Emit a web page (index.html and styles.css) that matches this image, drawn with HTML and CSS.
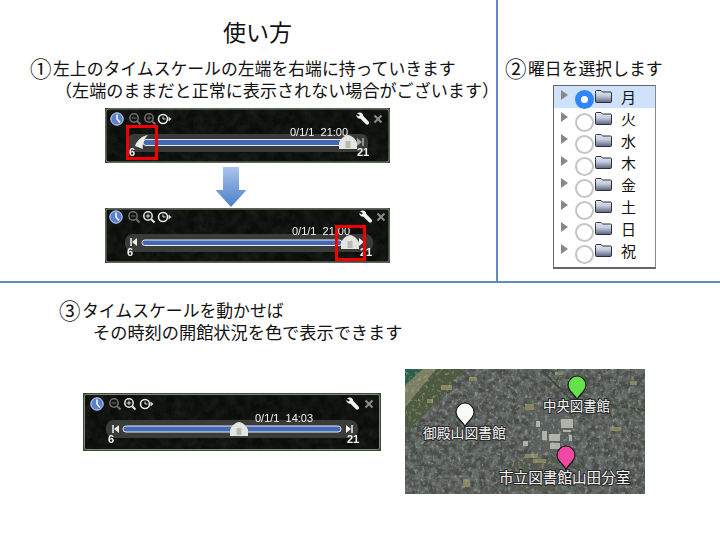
FILE: index.html
```html
<!DOCTYPE html>
<html lang="ja">
<head>
<meta charset="utf-8">
<title>使い方</title>
<link rel="stylesheet" href="styles.css">
</head>
<body>
<svg class="defs" width="0" height="0" aria-hidden="true">
  <defs>
    <filter id="grain" x="0" y="0" width="100%" height="100%">
      <feTurbulence type="fractalNoise" baseFrequency="0.11" numOctaves="4" seed="7"/>
      <feColorMatrix values="0 0 0 0 .16  0 0 0 0 .18  0 0 0 0 .16  1.8 0 0 0 -.5"/>
    </filter>
    <filter id="fine" x="0" y="0" width="100%" height="100%">
      <feTurbulence type="fractalNoise" baseFrequency="0.16" numOctaves="4" seed="11"/>
      <feColorMatrix values="0 0 0 0 .13  0 0 0 0 .15  0 0 0 0 .14  3 0 0 0 -1"/>
    </filter>
    <filter id="speck" x="0" y="0" width="100%" height="100%">
      <feTurbulence type="fractalNoise" baseFrequency="0.3" numOctaves="3" seed="3"/>
      <feColorMatrix values="0 0 0 0 .6  0 0 0 0 .62  0 0 0 0 .55  3 0 0 0 -1.6"/>
    </filter>
    <filter id="soft"><feGaussianBlur stdDeviation=".7"/></filter>
    <linearGradient id="fg" x1="0" y1="0" x2="0" y2="1">
      <stop offset="0" stop-color="#e6eaf2"/>
      <stop offset=".45" stop-color="#c2cbdc"/>
      <stop offset="1" stop-color="#59627f"/>
    </linearGradient>
    <linearGradient id="arrowfill" x1="0" y1="0" x2="0" y2="1">
      <stop offset="0" stop-color="#a9c5ec"/>
      <stop offset="1" stop-color="#4a7fc8"/>
    </linearGradient>
    <g id="clock"><circle r="6.200" fill="#5b7fd0" stroke="#d5dff5"/><path d="M0-4.500V0L3 3.500" fill="none" stroke="#fff" stroke-width="1.500"/></g>
    <g id="zoomout"><circle cx="-1" cy="-1" r="4.200" fill="none" stroke="currentColor" stroke-width="1.500"/><path d="M2.200 2.200L5.500 5.500" stroke="currentColor" stroke-width="2"/><path d="M-3.300-1H1.300" stroke="currentColor"/></g>
    <g id="zoomin"><use href="#zoomout"/><path d="M-1-3.300V1.300" stroke="currentColor"/></g>
    <g id="time"><circle cx="-1" r="4.500" fill="none" stroke="#ececec" stroke-width="1.600"/><path d="M-1-2.500V0H1.500" fill="none" stroke="#e6e6e6"/><path d="M4.500-2.500L7.500 0L4.500 2.500Z" fill="#ddd"/></g>
    <path id="wrench" d="M-6-5.500C-3-7.500 0-6 .3-3L6 3C6.600 4.500 5 6.200 3.300 5.500L-2.500-.3C-5-.2-6.800-2-6.700-4L-4.300-2.600L-3-4Z" fill="#f2f2f2"/>
    <path id="close" d="M-3.500-3.500L3.500 3.500M3.500-3.500L-3.500 3.500" stroke="#8c8c8c" stroke-width="2"/>
    <g id="skipl"><path d="M-3-4V4" stroke="#eee" stroke-width="1.500"/><path d="M3-4V4L-2 0Z" fill="#eee"/></g>
    <g id="skipr"><path d="M3-4V4" stroke="#eee" stroke-width="1.500"/><path d="M-3-4V4L2 0Z" fill="#eee"/></g>
    <g id="handle"><path d="M-9 7V1C-8-3-3-7 0-7C3-7 8-3 9 1V7Z" fill="#e4e4e0"/><rect x="-2.500" y="-1" width="5" height="7" fill="#b9b9b4"/></g>
    <path id="pin" d="M0 0C-2-6-9-8-9-15C-9-20-4.500-24 0-24C4.500-24 9-20 9-15C9-8 2-6 0 0Z" stroke="#111" stroke-width="1.200"/>
    <path id="folder" fill="url(#fg)" stroke="#2b2f3c" d="M.5 3.500V1.500Q.5.500 1.500.500H6L7.500 2H15.500Q16.500 2 16.500 3V11.500Q16.500 12.500 15.500 12.500H1.500Q.5 12.500 .5 11.500Z"/>
  </defs>
</svg>

<main class="slide">
  <div class="rule-v"></div>
  <div class="rule-h"></div>

  <h1 class="title">使い方</h1>
  <p class="step step-1"><span class="num-mark">①</span>左上のタイムスケールの左端を右端に持っていきます</p>
  <p class="step step-1b">（左端のままだと正常に表示されない場合がございます）</p>
  <p class="step step-2"><span class="num-mark">②</span>曜日を選択します</p>
  <p class="step step-3"><span class="num-mark">③</span>タイムスケールを動かせば</p>
  <p class="step step-3b">その時刻の開館状況を色で表示できます</p>

  <svg class="panel panel-a" viewBox="0 0 285 55" width="285" height="55">
    <rect width="285" height="55" fill="#3a4a33"/>
    <rect x="1" y="1" width="283" height="53" rx="3" fill="#0b0d0b" stroke="#7f8a7c"/>
    <rect class="haze" x="2" y="2" width="281" height="51" filter="url(#grain)"/>
    <use href="#clock" x="12" y="11"/>
    <use href="#zoomout" x="30" y="11" class="dim"/>
    <use href="#zoomin" x="45" y="11" class="dim"/>
    <use href="#time" x="59" y="11"/>
    <use href="#wrench" x="258" y="11"/>
    <use href="#close" x="273" y="11"/>
    <rect class="track" x="22" y="26" width="241" height="18" rx="7"/>
    <use href="#skipr" x="255" y="34" opacity=".6"/>
    <rect x="38" y="31.500" width="202" height="6" rx="3" fill="#4468b8" stroke="#e8e8e8"/>
    <use href="#handle" x="243" y="34"/>
    <path d="M43 27C37 28 32 32 30 38L38 41C37 36 39 31 43 27Z" fill="#ecece8"/>
    <text class="date" x="185" y="28">0/1/1&#160;&#160;21:00</text>
    <text class="num" x="24" y="48">6</text>
    <text class="num" x="252" y="48">21</text>
    <rect class="mark" x="22.500" y="18.500" width="29" height="32"/>
  </svg>

  <svg class="arrow" viewBox="0 0 32 40" width="32" height="40">
    <path d="M8 0H24V23H31.500L16 40L.5 23H8Z" fill="url(#arrowfill)"/>
  </svg>

  <svg class="panel panel-b" viewBox="0 0 285 55" width="285" height="55">
    <rect width="285" height="55" fill="#3a4a33"/>
    <rect x="1" y="1" width="283" height="53" rx="2" fill="#0b0d0b" stroke="#7f8a7c"/>
    <rect class="haze" x="2" y="2" width="281" height="51" filter="url(#grain)"/>
    <use href="#clock" x="11" y="9"/>
    <use href="#zoomout" x="29" y="9" class="dim"/>
    <use href="#zoomin" x="44" y="9" class="lit"/>
    <use href="#time" x="59" y="9"/>
    <use href="#wrench" x="261" y="9"/>
    <use href="#close" x="276" y="9"/>
    <rect class="track" x="20" y="26" width="248" height="18" rx="8"/>
    <use href="#skipl" x="29" y="34"/>
    <use href="#skipr" x="257" y="34"/>
    <rect x="37" y="32" width="200" height="5.500" rx="2.700" fill="#4468b8" stroke="#eee"/>
    <use href="#handle" x="245" y="34"/>
    <text class="date" x="187" y="27">0/1/1&#160;&#160;21:00</text>
    <text class="num" x="22" y="48">6</text>
    <text class="num" x="255" y="48">21</text>
    <rect class="mark" x="231.500" y="18.500" width="28" height="33"/>
  </svg>

  <svg class="panel panel-c" viewBox="0 0 298 58" width="298" height="58">
    <rect width="298" height="58" fill="#3a4a33"/>
    <rect x="1.500" y="1.500" width="295" height="55" rx="2" fill="#0b0d0b" stroke="#7f8a7c"/>
    <rect class="haze" x="2" y="2" width="294" height="54" filter="url(#grain)"/>
    <use href="#clock" x="14" y="11"/>
    <use href="#zoomout" x="32" y="11" class="dim"/>
    <use href="#zoomin" x="47" y="11" class="lit"/>
    <use href="#time" x="63" y="11"/>
    <use href="#wrench" x="270" y="11"/>
    <use href="#close" x="286" y="11"/>
    <rect class="track" x="23" y="27" width="252" height="18" rx="8"/>
    <use href="#skipl" x="33" y="36"/>
    <use href="#skipr" x="266" y="36"/>
    <rect x="40" y="33" width="218" height="6" rx="3" fill="#4468b8" stroke="#eee"/>
    <use href="#handle" x="156" y="36"/>
    <text class="date" x="172" y="29">0/1/1&#160;&#160;14:03</text>
    <text class="num" x="25" y="50">6</text>
    <text class="num" x="264" y="50">21</text>
  </svg>

  <ul class="days">
    <li class="day is-on"><span class="tri"></span><span class="radio"></span><svg class="fld" viewBox="0 0 17 13" width="17" height="13"><use href="#folder"/></svg><span class="name">月</span></li>
    <li class="day"><span class="tri"></span><span class="radio"></span><svg class="fld" viewBox="0 0 17 13" width="17" height="13"><use href="#folder"/></svg><span class="name">火</span></li>
    <li class="day"><span class="tri"></span><span class="radio"></span><svg class="fld" viewBox="0 0 17 13" width="17" height="13"><use href="#folder"/></svg><span class="name">水</span></li>
    <li class="day"><span class="tri"></span><span class="radio"></span><svg class="fld" viewBox="0 0 17 13" width="17" height="13"><use href="#folder"/></svg><span class="name">木</span></li>
    <li class="day"><span class="tri"></span><span class="radio"></span><svg class="fld" viewBox="0 0 17 13" width="17" height="13"><use href="#folder"/></svg><span class="name">金</span></li>
    <li class="day"><span class="tri"></span><span class="radio"></span><svg class="fld" viewBox="0 0 17 13" width="17" height="13"><use href="#folder"/></svg><span class="name">土</span></li>
    <li class="day"><span class="tri"></span><span class="radio"></span><svg class="fld" viewBox="0 0 17 13" width="17" height="13"><use href="#folder"/></svg><span class="name">日</span></li>
    <li class="day"><span class="tri"></span><span class="radio"></span><svg class="fld" viewBox="0 0 17 13" width="17" height="13"><use href="#folder"/></svg><span class="name">祝</span></li>
  </ul>

  <svg class="map" viewBox="0 0 240 125" width="240" height="125">
    <g filter="url(#soft)">
      <rect x="-6" y="-6" width="252" height="137" fill="#4a4e48"/>
      <rect x="-6" y="-6" width="252" height="137" filter="url(#fine)"/>
      <path d="M-6 68L20 45L66-6H-6Z" fill="#4d5a40"/>
      <path d="M-6 46L36-6H-6Z" fill="#7c7f60"/>
      <path d="M-6 22L24-6H-6Z" fill="#2a5b47"/>
      <path d="M125 40h40v45h-38Z" fill="#5a605d"/>
      <path d="M110 90H150V122H105Z" fill="#555a51"/>
      <g fill="#b0b2aa">
        <rect x="131" y="52" width="4" height="6"/><rect x="137" y="62" width="5" height="9"/><rect x="144" y="65" width="11" height="7"/><rect x="145" y="74" width="10" height="6"/><rect x="156" y="50" width="12" height="9"/><rect x="158" y="61" width="8" height="2"/><rect x="164" y="66" width="3" height="6"/><rect x="118" y="72" width="5" height="5"/>
      </g>
      <g fill="#86855f">
        <rect x="120" y="35" width="9" height="6"/><rect x="36" y="16" width="11" height="5"/><rect x="120" y="85" width="13" height="4"/><rect x="128" y="90" width="13" height="4"/><rect x="205" y="58" width="11" height="4"/><rect x="64" y="8" width="8" height="4"/><rect x="225" y="12" width="7" height="4"/><rect x="150" y="3" width="8" height="3"/><rect x="58" y="110" width="7" height="8"/><rect x="22" y="30" width="6" height="4"/>
      </g>
      <path d="M130-6L165 30L246 42" stroke="#3f4a38" stroke-width="2" fill="none"/>
      <rect x="-6" y="-6" width="252" height="137" filter="url(#speck)" opacity=".45"/>
    </g>
    <use href="#pin" x="60" y="58" fill="#fbfbf8"/>
    <use href="#pin" x="172" y="31" fill="#66e04c"/>
    <use href="#pin" x="161" y="101" fill="#ee4aa5"/>
    <text class="place place-a" x="18" y="69">御殿山図書館</text>
    <text class="place place-b" x="138" y="42">中央図書館</text>
    <text class="place place-c" x="94" y="114">市立図書館山田分室</text>
  </svg>
</main>
</body>
</html>
```

FILE: styles.css
```css
* { box-sizing: border-box; }
html, body { margin: 0; padding: 0; background: #fff; }
.defs { position: absolute; }
.slide {
  position: relative;
  width: 720px;
  height: 540px;
  overflow: hidden;
  font-family: "Noto Sans CJK JP", "Noto Sans", sans-serif;
  color: #111;
}
.rule-v { position: absolute; left: 496px; top: 0; width: 2px; height: 283px; background: #5f8ac6; }
.rule-h { position: absolute; left: 0; top: 281px; width: 720px; height: 2px; background: #5f8ac6; }

.title { position: absolute; left: 223px; top: 15px; margin: 0; font-size: 23px; line-height: 32px; font-weight: 400; }
.step { position: absolute; margin: 0; font-size: 16.83px; line-height: 22px; white-space: nowrap; }
.num-mark { display: inline-block; width: 23px; font-size: 21.500px; line-height: 0; vertical-align: -2px; }
.step-1 { left: 30px; top: 57px; }
.step-1b { left: 55px; top: 79px; font-size: 17.08px; }
.step-2 { left: 505px; top: 57px; }
.step-3 { left: 59px; top: 299px; }
.step-3b { left: 93px; top: 321px; font-size: 17.2px; }

.panel { position: absolute; display: block; filter: blur(.55px); color: #666; }
.panel-a { left: 105px; top: 108px; }
.panel-b { left: 105px; top: 208px; }
.panel-c { left: 83px; top: 393px; }
.haze { opacity: .14; }
.track { fill: #3a3c3a; }
.dim { color: #6f6f6f; }
.lit { color: #e4e4e4; }
.date { font: 11px "Liberation Sans", sans-serif; fill: #f4f4f4; }
.num { font: bold 11px "Liberation Sans", sans-serif; fill: #f6f6f6; }
.mark { fill: none; stroke: #f00000; stroke-width: 3; }
.arrow { position: absolute; left: 215px; top: 167px; display: block; }

.days {
  position: absolute;
  left: 553px;
  top: 85px;
  width: 103px;
  height: 184px;
  margin: 0;
  padding: 0;
  list-style: none;
  background: #fff;
  border: 1px solid #666;
  border-right-color: #888;
  border-bottom-width: 2px;
}
.day { display: flex; align-items: flex-start; height: 22px; position: relative; }
.is-on { background: #cfe2fb; }
.tri {
  width: 0; height: 0;
  margin: 4px 0 0 7px;
  border-left: 7px solid #888;
  border-top: 5px solid transparent;
  border-bottom: 5px solid transparent;
}
.radio {
  width: 19px; height: 19px;
  margin: 5px 0 0 7px;
  flex: none;
  border-radius: 50%;
  border: 2px solid #c4c4c4;
  background: #fff;
  position: relative;
  z-index: 1;
}
.is-on .radio { border: 6px solid #2f86f6; margin-top: 4px; }
.fld { flex: none; margin: 4px 0 0 1px; }
.name { margin-left: 9px; font-size: 15px; line-height: 22px; color: #111; }

.map { position: absolute; left: 405px; top: 369px; display: block; }
.place {
  font-family: "Noto Sans CJK JP", sans-serif;
  font-size: 13.8px;
  fill: #f5f5f5;
  stroke: #2a2a2a;
  stroke-width: 2px;
  paint-order: stroke;
}
.place-b { font-size: 13.4px; }
.place-c { font-size: 14.6px; }
```
